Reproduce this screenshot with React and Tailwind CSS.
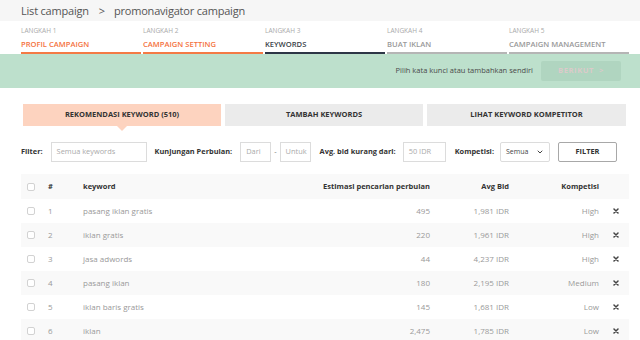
import { ChevronDown } from 'lucide-react'

const steps = [
  { label: 'LANGKAH 1', title: 'PROFIL CAMPAIGN', state: 'done' },
  { label: 'LANGKAH 2', title: 'CAMPAIGN SETTING', state: 'done' },
  { label: 'LANGKAH 3', title: 'KEYWORDS', state: 'active' },
  { label: 'LANGKAH 4', title: 'BUAT IKLAN', state: 'todo' },
  { label: 'LANGKAH 5', title: 'CAMPAIGN MANAGEMENT', state: 'todo' },
]

const rows = [
  ['pasang iklan gratis', '495', '1,981 IDR', 'High'],
  ['iklan gratis', '220', '1,961 IDR', 'High'],
  ['jasa adwords', '44', '4,237 IDR', 'High'],
  ['pasang iklan', '180', '2,195 IDR', 'Medium'],
  ['iklan baris gratis', '145', '1,681 IDR', 'Low'],
  ['iklan', '2,475', '1,785 IDR', 'Low'],
]

function Cross() {
  return (
    <svg width="6" height="6" viewBox="0 0 6 6">
      <path d="M1 1 L5 5 M5 1 L1 5" stroke="#444" strokeWidth="1.5" strokeLinecap="round" />
    </svg>
  )
}

function Box() {
  return <div className="w-[8px] h-[8px] rounded-[2px] border border-[#d2d2d2] bg-white" />
}

export default function App() {
  return (
    <div className="w-[640px] h-[340px] overflow-hidden bg-white font-['Open_Sans',sans-serif] text-[#333]">
      {/* breadcrumb */}
      <div className="h-[21px] bg-[#f6f6f6] pl-[21px] flex items-center text-[11px] tracking-[-0.2px] leading-none text-[#555]">
        <span>List campaign</span>
        <span className="ml-[10px] mr-[9px]">&gt;</span>
        <span>promonavigator campaign</span>
      </div>

      {/* steps */}
      <div className="pl-[21px] pt-[6px] grid grid-cols-[120px_120px_120px_120px_120px] gap-x-[2px]">
        {steps.map(s => (
          <div key={s.label}>
            <div className="text-[6.5px] leading-[8px] text-[#aaa]">{s.label}</div>
            <div
              className={
                'mt-[4px] text-[7.6px] leading-[10px] font-semibold ' +
                (s.state === 'done' ? 'text-[#f47240]' : s.state === 'active' ? 'text-[#3a3f48]' : 'text-[#999]')
              }
            >
              {s.title}
            </div>
            <div
              className={
                'mt-[3px] h-[2px] ' +
                (s.state === 'done' ? 'bg-[#f47a45]' : s.state === 'active' ? 'bg-[#2d3646]' : 'bg-[#b5b5b5]')
              }
            />
          </div>
        ))}
      </div>

      {/* green info bar */}
      <div className="h-[34px] bg-[#bde0cc] flex items-center justify-end pr-[19px]">
        <span className="text-[7.5px] text-[#4a4a4a]">Pilih kata kunci atau tambahkan sendiri</span>
        <div className="ml-[8px] w-[80px] h-[20px] rounded-[2px] bg-[#b0d5c0] flex items-center justify-center text-[7.5px] font-bold tracking-[0.6px] text-[#dccaca]">
          BERIKUT <span className="ml-[5px]">&gt;</span>
        </div>
      </div>

      {/* tabs */}
      <div className="mt-[16px] pl-[23px] flex gap-[4px]">
        <div className="relative w-[198px] h-[22px] bg-[#fdd3bf] flex items-center justify-center text-[7.5px] font-bold text-[#333]">
          REKOMENDASI KEYWORD (510)
          <div className="absolute left-[94px] top-[22px] w-0 h-0 border-l-[5px] border-r-[5px] border-t-[5px] border-l-transparent border-r-transparent border-t-[#fdd3bf]" />
        </div>
        <div className="w-[198px] h-[22px] bg-[#ebebeb] flex items-center justify-center text-[7.5px] font-bold text-[#333]">
          TAMBAH KEYWORDS
        </div>
        <div className="w-[199px] h-[22px] bg-[#ebebeb] flex items-center justify-center text-[7.5px] font-bold text-[#333]">
          LIHAT KEYWORD KOMPETITOR
        </div>
      </div>

      {/* filters */}
      <div className="mt-[16px] pl-[21px] flex items-center h-[20px] text-[7.4px]">
        <span className="font-bold text-[#333]">Filter:</span>
        <div className="ml-[8px] w-[96px] h-[20px] border border-[#dcdcdc] flex items-center pl-[5px] text-[#aaa]">Semua keywords</div>
        <span className="ml-[8px] font-bold text-[#333]">Kunjungan Perbulan:</span>
        <div className="ml-[8px] w-[31px] h-[20px] border border-[#dcdcdc] flex items-center pl-[5px] text-[#aaa]">Dari</div>
        <span className="mx-[3px] text-[#777]">-</span>
        <div className="w-[31px] h-[20px] border border-[#dcdcdc] flex items-center pl-[5px] text-[#aaa] overflow-hidden whitespace-nowrap">Untuk</div>
        <span className="ml-[9px] font-bold text-[#333]">Avg. bid kurang dari:</span>
        <div className="ml-[7px] w-[43px] h-[20px] border border-[#dcdcdc] flex items-center pl-[5px] text-[#aaa]">50 IDR</div>
        <span className="ml-[9px] font-bold text-[#333]">Kompetisi:</span>
        <div className="ml-[6px] w-[50px] h-[20px] border border-[#dcdcdc] rounded-[2px] flex items-center justify-between pl-[5px] pr-[5px] text-[7px] text-[#444]">
          Semua
          <ChevronDown size={8} strokeWidth={3} color="#444" />
        </div>
        <div className="ml-[8px] w-[59px] h-[20px] border border-[#a8a8a8] rounded-[2px] flex items-center justify-center font-bold text-[#333]">FILTER</div>
      </div>

      {/* table */}
      <div className="mt-[12px] ml-[21px] w-[608px] text-[8px]">
        <div className="h-[25px] bg-[#f9f9f9] flex items-center font-bold text-[7.5px] text-[#333]">
          <div className="pl-[6px] w-[27px]"><Box /></div>
          <div className="w-[35px]">#</div>
          <div className="w-[187px]">keyword</div>
          <div className="w-[160px] text-right">Estimasi pencarian perbulan</div>
          <div className="w-[79px] text-right">Avg Bid</div>
          <div className="w-[90px] text-right">Kompetisi</div>
          <div className="flex-1" />
        </div>
        {rows.map(([kw, est, bid, komp], i) => (
          <div key={kw} className={'h-[24px] flex items-center text-[#999] ' + (i % 2 === 1 ? 'bg-[#f9f9f9]' : 'bg-white')}>
            <div className="pl-[6px] w-[27px]"><Box /></div>
            <div className="w-[35px]">{i + 1}</div>
            <div className="w-[187px]">{kw}</div>
            <div className="w-[160px] text-right">{est}</div>
            <div className="w-[79px] text-right">{bid}</div>
            <div className="w-[90px] text-right">{komp}</div>
            <div className="pl-[14px] flex items-center"><Cross /></div>
          </div>
        ))}
      </div>
    </div>
  )
}
